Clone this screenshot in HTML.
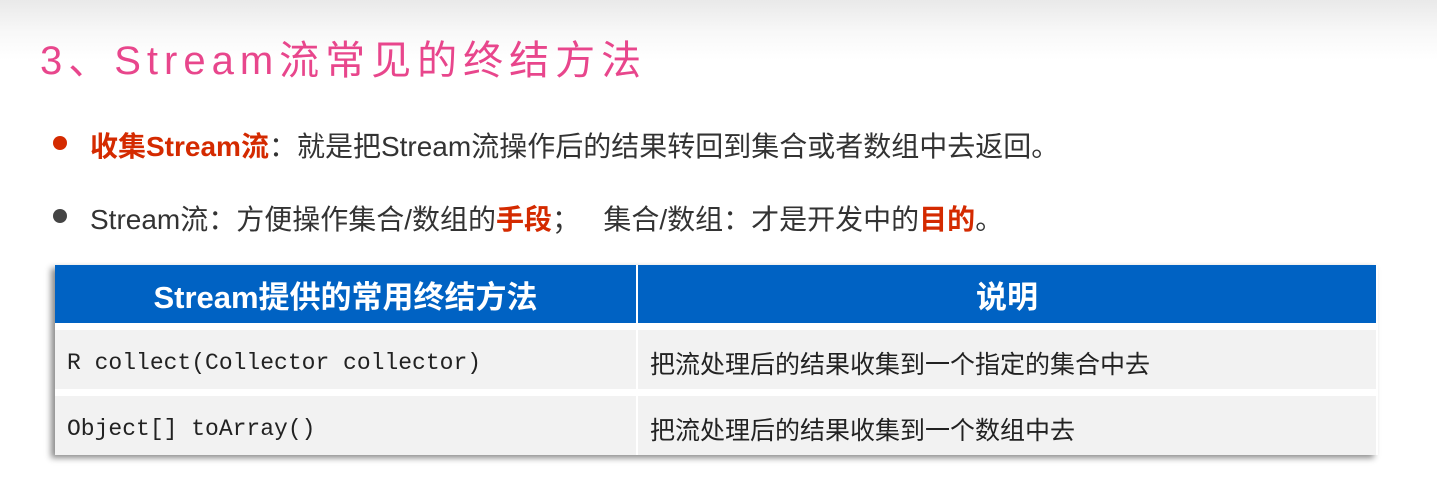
<!DOCTYPE html>
<html><head><meta charset="utf-8"><style>
body{margin:0;width:1437px;height:495px;overflow:hidden;background:linear-gradient(#e9e9e9 0,#f7f7f7 30px,#fff 60px);font-family:"Liberation Sans","Noto Sans CJK SC",sans-serif;position:relative}
.t{position:absolute;left:40px;top:28px;font-size:40px;color:#e8468c;letter-spacing:6px;font-family:"Liberation Sans","WenQuanYi Zen Hei",sans-serif;white-space:nowrap}
.b{position:absolute;left:90px;font-size:28px;color:#333;white-space:nowrap}
.d{position:absolute;left:53px;width:14px;height:14px;border-radius:50%}
.r{color:#d42a00;font-weight:bold}
table{position:absolute;left:55px;top:265px;width:1323px;border-collapse:collapse;box-shadow:-4px 3px 6px rgba(0,0,0,.45)}
th{background:#0062c3;color:#fff;height:58px;font-size:31px;border-right:2px solid #fff;padding:0}
td{background:#f2f2f2;height:53px;border-top:7px solid #fff;border-right:2px solid #fff;font-size:25px;color:#222;padding:6px 0 0 12px}
td.m{font-family:"Liberation Mono",monospace;font-size:23px}
</style></head><body>
<div class="t">3、Stream流常见的终结方法</div>
<div class="d" style="top:136px;background:#d42a00"></div>
<div class="b" style="top:125px"><span class="r">收集Stream流</span>：就是把Stream流操作后的结果转回到集合或者数组中去返回。</div>
<div class="d" style="top:209px;background:#444"></div>
<div class="b" style="top:198px">Stream流：方便操作集合/数组的<span class="r">手段</span>；&nbsp;&nbsp;&nbsp;集合/数组：才是开发中的<span class="r">目的</span>。</div>
<table>
<tr><th style="width:581px">Stream提供的常用终结方法</th><th>说明</th></tr>
<tr><td class="m">R collect(Collector collector)</td><td>把流处理后的结果收集到一个指定的集合中去</td></tr>
<tr><td class="m">Object[] toArray()</td><td>把流处理后的结果收集到一个数组中去</td></tr>
</table>
</body></html>
